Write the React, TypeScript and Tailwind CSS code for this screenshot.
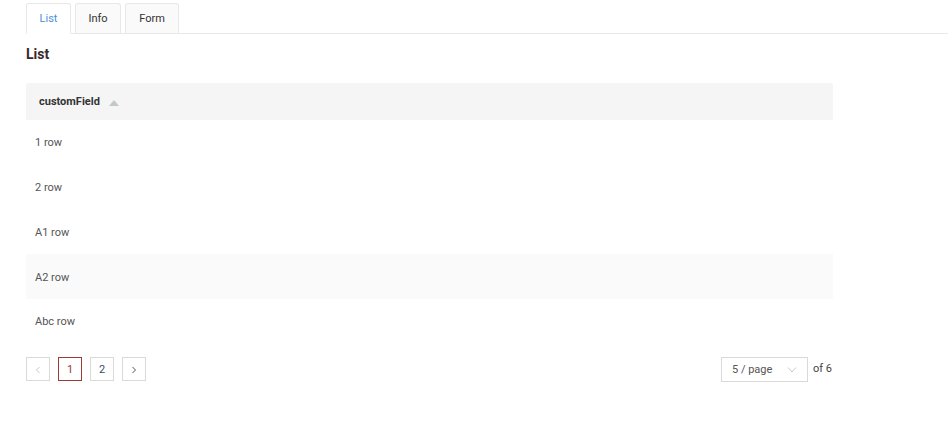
import React from "react";

const rows = ["1 row", "2 row", "A1 row", "A2 row", "Abc row"];

export default function App() {
  return (
    <div className="w-[950px] h-[429px] bg-white text-[11px] text-[#555]" style={{ fontFamily: "Roboto, 'Liberation Sans', sans-serif" }}>
      {/* Tabs */}
      <div className="pt-[3px] pl-[26px] pr-[2px]">
        <div className="flex gap-[4px] border-b border-[#e8e8e8]">
          <div className="h-[31px] -mb-px w-[45px] flex items-center justify-center pt-[1px] bg-white border border-[#e8e8e8] border-b-white rounded-t-[3px] text-[#4a90d9] text-[11px]">
            List
          </div>
          <div className="h-[30px] w-[46px] flex items-center justify-center pt-[1px] bg-[#fafafa] border border-[#e8e8e8] border-b-0 rounded-t-[3px] text-[#333] text-[11px]">
            Info
          </div>
          <div className="h-[30px] w-[54px] flex items-center justify-center pt-[1px] bg-[#fafafa] border border-[#e8e8e8] border-b-0 rounded-t-[3px] text-[#333] text-[11px]">
            Form
          </div>
        </div>
      </div>

      <div className="pl-[26px] w-[833px]">
        <h2 className="mt-[11px] h-[18px] leading-[18px] text-[14px] font-bold text-[#3a2a2a]">List</h2>

        {/* Table */}
        <div className="mt-[20px]">
          <div className="h-[37px] pt-[2px] bg-[#f5f5f5] rounded-t-[3px] flex items-center pl-[13px] gap-[9px]">
            <span className="font-bold text-[11px] text-[#333]">customField</span>
            <svg width="10" height="6" viewBox="0 0 10 6" className="mt-[0px]">
              <path d="M5 0 L10 6 L0 6 Z" fill="#c2c9c6" />
            </svg>
          </div>
          {rows.map((r, i) => (
            <div
              key={r}
              className={`h-[44.8px] pt-[2px] flex items-center pl-[9px] ${i === 3 ? "bg-[#fafafa]" : "bg-white"}`}
            >
              {r}
            </div>
          ))}
        </div>

        {/* Pagination */}
        <div className="mt-[13px] flex items-center justify-between">
          <div className="flex gap-[8px]">
            <div className="w-[24px] h-[24px] pt-[2px] border border-[#d9d9d9] flex items-center justify-center">
              <svg width="8" height="8" viewBox="0 0 8 8">
                <path d="M5.5 1 L2.5 4 L5.5 7" fill="none" stroke="#c8c8c8" strokeWidth="1" />
              </svg>
            </div>
            <div className="w-[24px] h-[24px] pt-[2px] border border-[#9b3b34] text-[#9b3b34] flex items-center justify-center">
              1
            </div>
            <div className="w-[24px] h-[24px] pt-[2px] border border-[#d9d9d9] text-[#3a4a6a] flex items-center justify-center">
              2
            </div>
            <div className="w-[24px] h-[24px] pt-[2px] border border-[#d9d9d9] flex items-center justify-center">
              <svg width="8" height="8" viewBox="0 0 8 8">
                <path d="M2.5 1 L5.5 4 L2.5 7" fill="none" stroke="#555" strokeWidth="1" />
              </svg>
            </div>
          </div>
          <div className="flex items-center gap-[5px] mr-[1px]">
            <div className="w-[87px] h-[25px] pt-[2px] border border-[#d9d9d9] flex items-center justify-between pl-[10px] pr-[10px] text-[#555]">
              <span>5 / page</span>
              <svg width="10" height="6" viewBox="0 0 10 6">
                <path d="M1 0.5 L5 5 L9 0.5" fill="none" stroke="#c8c8c8" strokeWidth="1" />
              </svg>
            </div>
            <span className="text-[#444]">of 6</span>
          </div>
        </div>
      </div>
    </div>
  );
}
